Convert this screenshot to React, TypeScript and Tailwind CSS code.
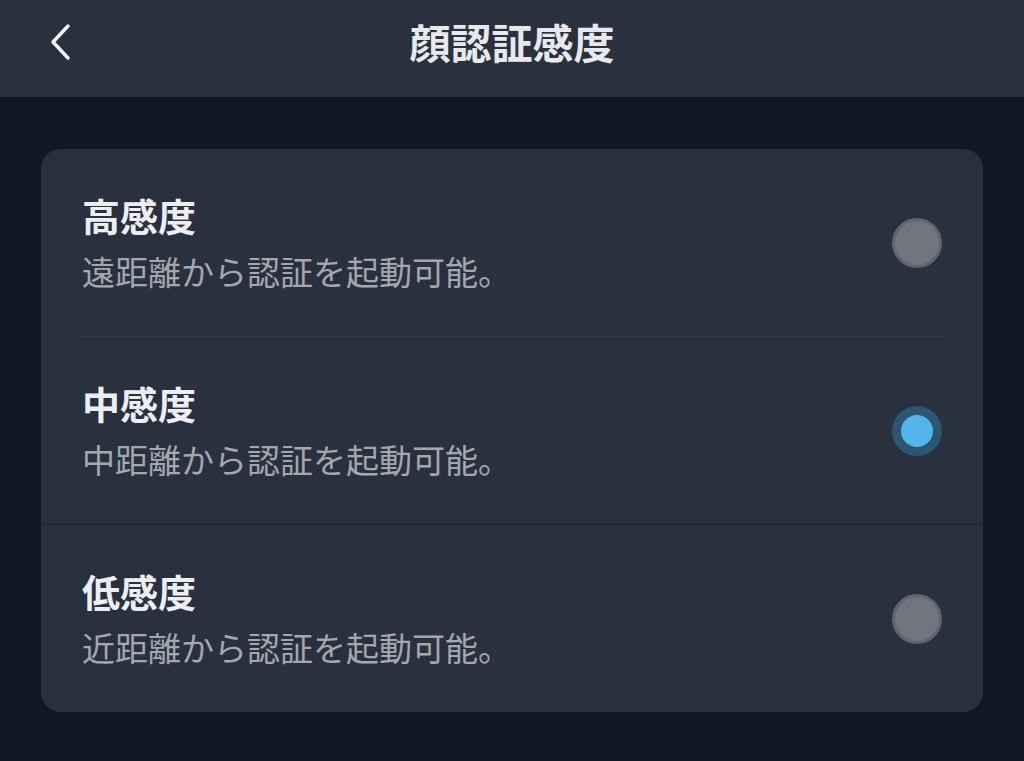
import React from "react";

const font = { fontFamily: '"Noto Sans CJK JP", "Noto Sans", sans-serif' };

const rows = [
  { title: "高感度", desc: "遠距離から認証を起動可能。", selected: false },
  { title: "中感度", desc: "中距離から認証を起動可能。", selected: true },
  { title: "低感度", desc: "近距離から認証を起動可能。", selected: false },
];

function Radio({ selected }: { selected: boolean }) {
  if (selected) {
    return (
      <div className="flex h-[50px] w-[50px] items-center justify-center rounded-full bg-[#2f5671]">
        <div className="h-[32px] w-[32px] rounded-full bg-[#52b6ec]" />
      </div>
    );
  }
  return <div className="h-[50px] w-[50px] rounded-full border-[3px] border-[#5e6470] bg-[#71757e]" />;
}

export default function App() {
  return (
    <div className="flex h-[761px] w-[1024px] flex-col bg-[#121824]" style={font}>
      <div className="relative flex h-[97px] items-center justify-center bg-[#29313f]">
        <svg className="absolute left-[46px] top-[23px]" width="28" height="38" viewBox="0 0 28 38" fill="none">
          <path d="M22 3 L7 19 L22 35" stroke="#eef0f3" strokeWidth="3.5" strokeLinecap="round" strokeLinejoin="round" />
        </svg>
        <div className="-mt-[14px] text-[41px] font-bold text-[#e8e9ec]">顔認証感度</div>
      </div>
      <div className="px-[41px] pt-[52px]">
        <div className="overflow-hidden rounded-[20px] bg-[#29313f]">
          {rows.map((r, i) => (
            <div key={i} className="flex flex-col">
              {i === 1 && <div className="mx-[41px] h-px bg-[#353d4b]" />}
              {i === 2 && <div className="h-px bg-[#1b2230]" />}
              <div className="flex h-[187px] items-center justify-between pl-[41px] pr-[41px]">
                <div className="-mt-[2px] flex flex-col">
                  <div className="text-[38px] font-bold leading-[44px] text-[#eceef1]">{r.title}</div>
                  <div className="mt-[14px] text-[33px] leading-[40px] text-[#a3a7ae]">{r.desc}</div>
                </div>
                <Radio selected={r.selected} />
              </div>
            </div>
          ))}
        </div>
      </div>
    </div>
  );
}
